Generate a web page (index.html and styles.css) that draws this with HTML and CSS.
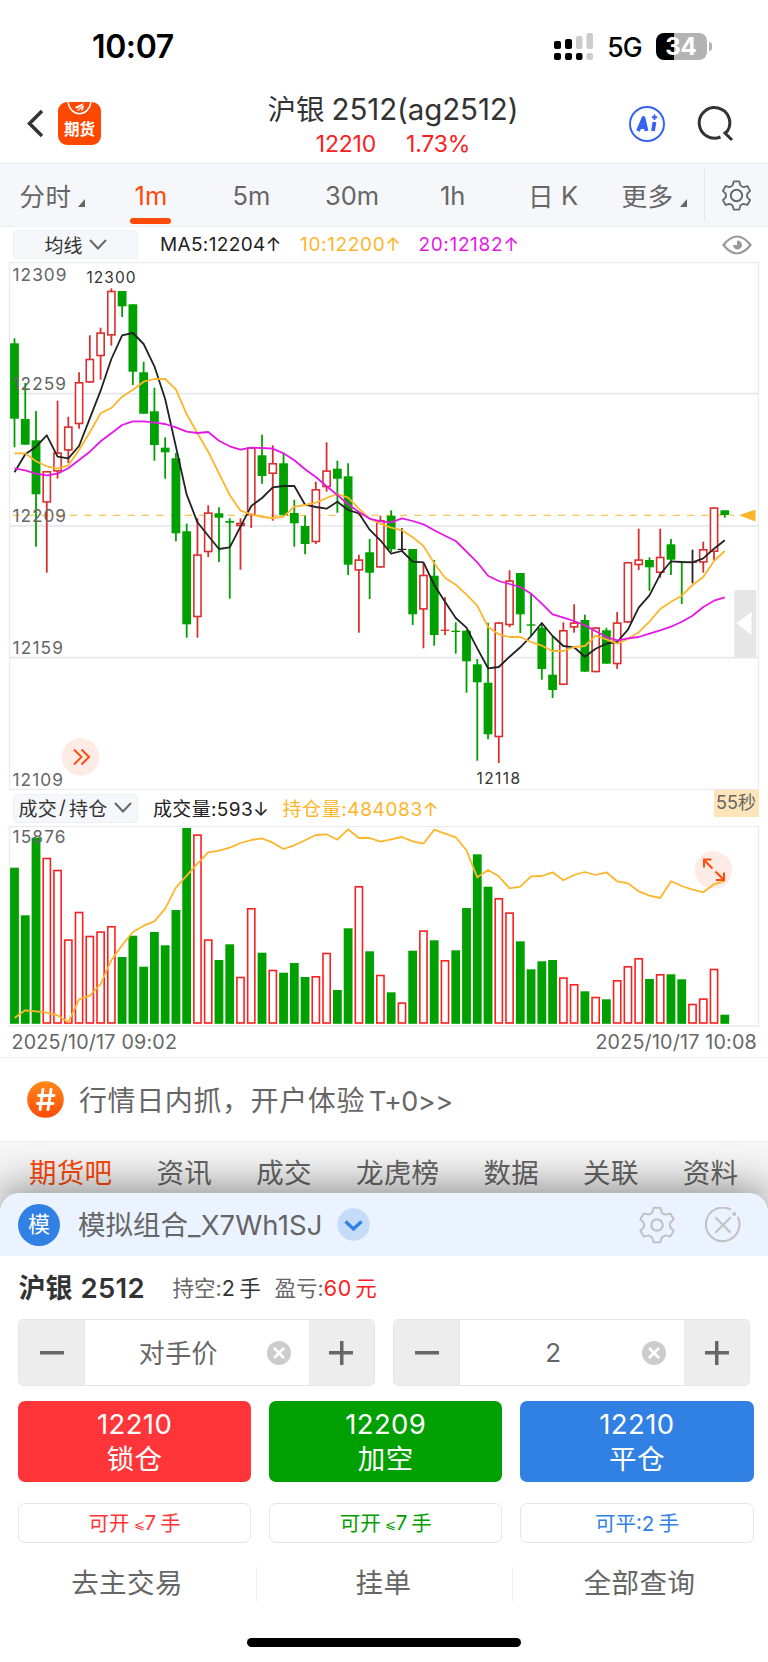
FILE: index.html
```html
<!DOCTYPE html>
<html lang="zh-CN">
<head>
<meta charset="utf-8">
<title>沪银 2512</title>
<link rel="stylesheet" href="styles.css">
</head>
<body>
<svg class="defs" width="0" height="0">
  <symbol id="gear" viewBox="-56 -56 112 112">
    <path d="M-14-37L-10-51H10L14-37Q18-32 25-30.600L39.200-34.200L49.200-16.800L39-6.400Q37 0 39 6.400L49.200 16.800L39.200 34.200L25 30.600Q18 32 14 37L10 51H-10L-14 37Q-18 32-25 30.600L-39.200 34.200L-49.200 16.800L-39 6.400Q-37 0-39-6.400L-49.200-16.800L-39.200-34.200L-25-30.600Q-18-32-14-37Z"/>
  </symbol>
</svg>
<div class="app">
  <div class="status">
    <span class="clock">10:07</span>
    <svg class="signal" width="40" height="28" viewBox="0 0 40 28">
      <rect x="0" y="9" width="7" height="8" rx="2"/><rect x="11" y="7" width="7" height="10" rx="2"/>
      <rect x="22" y="4" width="6.500" height="13" rx="2" fill="#ccc"/><rect x="32.500" y="1" width="6.500" height="16" rx="2" fill="#ccc"/>
      <rect x="0" y="21" width="7" height="7" rx="2"/><rect x="11" y="21" width="7" height="7" rx="2"/>
      <rect x="22" y="21" width="6.500" height="7" rx="2"/><rect x="32.500" y="21" width="6.500" height="7" rx="2" fill="#ccc"/>
    </svg>
    <span class="net">5G</span>
    <span class="battery">34</span><i class="battery-tip"></i>
  </div>

  <header class="header">
    <svg class="back" width="18" height="30" viewBox="0 0 18 30"><path d="M15 2L2.500 14.500L15 27" fill="none" stroke="#333" stroke-width="3.500"/></svg>
    <div class="logo">
      <svg width="43" height="17" viewBox="0 0 43 17"><path d="M10 0A11.600 13.500 0 0 0 33 0" fill="none" stroke="#fff" stroke-width="1.500"/><path d="M17 5L26 1L24 4L20 6Q18 7 17 5ZM19 8L26 3L25 8L23 9L23.500 6L20 9Z" fill="#fff"/></svg>
      <span>期货</span>
    </div>
    <div class="title">
      <h1>沪银<em>2512(ag2512)</em></h1>
      <p><span>12210</span><span>1.73%</span></p>
    </div>
    <svg class="ai" width="38" height="38" viewBox="0 0 38 38">
      <circle cx="19" cy="19" r="17" fill="none" stroke="#3763f5" stroke-width="2"/>
      <g fill="none" stroke="#3763f5" stroke-width="3.800" stroke-linejoin="round"><path d="M10 26L15.500 13L18.500 26M12.500 22H18M26.500 17L25 26"/><path d="M26.500 9.500V15M23.800 12.300H29.300" stroke-width="1.900"/></g>
    </svg>
    <svg class="search" width="38" height="38" viewBox="0 0 38 38"><path d="M24.500 32A15.300 15.300 0 1 1 31.500 26L29 28L36 35" fill="none" stroke="#333" stroke-width="3"/></svg>
  </header>

  <nav class="periods">
    <span class="more cjk">分时<i></i></span><span class="on">1m</span><span>5m</span><span>30m</span><span>1h</span><span class="cjk">日<em>K</em></span><span class="more cjk">更多<i></i></span>
    <b class="settings"><svg width="31" height="31" fill="none" stroke="#666" stroke-width="6.500" stroke-linejoin="round"><use href="#gear"/><circle cx="15.500" cy="15.500" r="5.700" stroke-width="1.900"/></svg></b>
  </nav>

  <div class="legend">
    <span class="pill">均线<svg width="18" height="11" viewBox="0 0 18 11"><path d="M1 1L9 9.500L17 1"/></svg></span>
    <span class="ma5">MA5:12204↑</span><span class="ma10">10:12200↑</span><span class="ma20">20:12182↑</span>
    <svg class="eye" width="30" height="20" viewBox="0 0 30 20"><path d="M1.500 10Q15-7 28.500 10Q15 27 1.500 10Z" fill="none" stroke="#999" stroke-width="2.200"/><path d="M15 5.500V10H11A4.500 4.500 0 1 0 15 5.500Z" fill="#999"/></svg>
  </div>

  <svg class="chart" id="price" width="768" height="528" viewBox="0 262 768 528">
    <g class="grid"><path d="M9.500 262.500H758.500V789.500H9.500Z"/><path class="mid" d="M10 393.700H758M10 525.800H758M10 657.700H758"/></g>
    <path d="M12.600 515.300H734" stroke="#fdb52b" stroke-width="1.100" stroke-dasharray="7.200 7.150"/>
    <path d="M739 515.300L755.500 509.500V521.500Z" fill="#fdb52b"/>
    <g id="candles"></g>
    <g class="axis">
      <text x="12.500" y="281" textLength="54">12309</text>
      <text x="12.500" y="389.700" textLength="53.500">12259</text>
      <text x="12.500" y="521.700" textLength="53.500">12209</text>
      <text x="12.500" y="653.700" textLength="50.500">12159</text>
      <text x="12.500" y="785.500" textLength="50.500">12109</text>
      <g class="peak"><text x="86.500" y="283" textLength="49">12300</text><text x="476.500" y="784.300" textLength="43.500">12118</text></g>
    </g>
    <g id="averages"></g>
    <circle cx="80.700" cy="757" r="18.700" fill="#feebe5"/>
    <path d="M74 749.500L81.500 757L74 764.500M81.500 749.500L89 757L81.500 764.500" fill="none" stroke="#ff4a0a" stroke-width="1.900"/>
    <path d="M734.300 592Q734.300 590 736.300 590H756.500V657.500H734.300Z" fill="#e6e6e6"/><path d="M736.500 623.300L751.500 612V635Z" fill="#fff"/>
  </svg>

  <div class="legend volume-legend">
    <span class="pill">成交<em>/</em>持仓<svg width="18" height="11" viewBox="0 0 18 11"><path d="M1 1L9 9.500L17 1"/></svg></span>
    <span class="vol">成交量:593↓</span><span class="oi">持仓量:484083↑</span>
    <span class="countdown">55秒</span>
  </div>

  <svg class="chart" id="volume" width="768" height="201" viewBox="0 826 768 201">
    <g class="grid"><path d="M9.500 826.500H758.500V1026H9.500Z"/></g>
    <g id="bars"></g>
    <g class="axis"><text x="12.500" y="843" textLength="53">15876</text></g>
    <circle cx="713.500" cy="870" r="18.700" fill="#feebe5"/>
    <g id="interest"></g>
    <path d="M712.500 868.500L704 860M704 867.500V859.500H711.500M715.500 871.500L724 880M724 872.500V880H716" fill="none" stroke="#ff4a0a" stroke-width="2"/>
  </svg>
  <div class="dates"><span>2025/10/17 09:02</span><span>2025/10/17 10:08</span></div>

  <div class="banner">
    <svg width="37" height="37" viewBox="0 0 37 37"><defs><linearGradient id="hot" x2="0" y2="1"><stop stop-color="#ff8a1a"/><stop offset="1" stop-color="#ff4b0a"/></linearGradient></defs><circle cx="18.500" cy="18.500" r="18.300" fill="url(#hot)"/><path d="M16 8.500L13 28.500M24 8.500L21 28.500M11.500 14.500H27M10.500 22.500H26" stroke="#fff" stroke-width="2.900" stroke-linecap="round"/></svg>
    <span>行情日内抓，开户体验<em>T+0&gt;&gt;</em></span>
  </div>

  <nav class="topics"><span class="on">期货吧</span><span>资讯</span><span>成交</span><span>龙虎榜</span><span>数据</span><span>关联</span><span>资料</span></nav>

  <section class="sheet">
    <div class="account">
      <span class="badge">模</span>
      <span class="name">模拟组合<em>_X7Wh1SJ</em></span>
      <svg width="33" height="33" viewBox="0 0 33 33"><circle cx="16.500" cy="16.500" r="16.200" fill="#c5dcf8"/><path d="M8.500 13.500L16.500 21L24.500 13.500" fill="none" stroke="#3180e3" stroke-width="3.300"/></svg>
      <svg class="cog" width="38" height="38" fill="none" stroke="#c2c2c2" stroke-width="6" stroke-linejoin="round"><use href="#gear"/><circle cx="19" cy="19" r="5.700" stroke-width="2.200"/></svg>
      <svg width="36" height="36" viewBox="0 0 36 36" fill="none" stroke="#c2c2c2" stroke-width="2.100"><path d="M26 2.700A16.800 16.800 0 1 0 32.700 9.700M10.300 10.300L25.700 25.700M25.700 10.300L10.300 25.700"/><circle cx="29.200" cy="7" r="2" fill="#c2c2c2" stroke="none"/></svg>
    </div>
    <div class="position">
      <strong>沪银<em>2512</em></strong>
      <span class="held">持空:<b>2<u>手</u></b></span>
      <span class="profit">盈亏:<b>60<u>元</u></b></span>
    </div>
    <div class="steppers">
      <div class="stepper"><i class="minus"></i><span class="cjk">对手价</span><svg width="24" height="24" viewBox="0 0 24 24"><circle cx="12" cy="12" r="12" fill="#ccc"/><path d="M7 7L17 17M17 7L7 17" stroke="#fff" stroke-width="2.500"/></svg><i class="plus"></i></div>
      <div class="stepper"><i class="minus"></i><span>2</span><svg width="24" height="24" viewBox="0 0 24 24"><circle cx="12" cy="12" r="12" fill="#ccc"/><path d="M7 7L17 17M17 7L7 17" stroke="#fff" stroke-width="2.500"/></svg><i class="plus"></i></div>
    </div>
    <div class="trade">
      <button class="red"><span>12210</span><span>锁仓</span></button>
      <button class="green"><span>12209</span><span>加空</span></button>
      <button class="blue"><span>12210</span><span>平仓</span></button>
    </div>
    <div class="limits">
      <span class="red">可开<small>⩽</small>7<u>手</u></span>
      <span class="green">可开<small>⩽</small>7<u>手</u></span>
      <span class="blue">可平:2<u>手</u></span>
    </div>
    <div class="actions"><span>去主交易</span><span>挂单</span><span>全部查询</span></div>
    <div class="home"></div>
  </section>
</div>
<script src="chart.js"></script>
</body>
</html>
```
FILE: styles.css
```css
* { box-sizing: border-box; }
body {
  margin: 0;
  background: #fff;
  color: #666;
  font-family: Inter, "Noto Sans CJK SC", sans-serif;
  -webkit-font-smoothing: antialiased;
}
em, i { font-style: normal; }
u { text-decoration: none; }
svg { display: block; flex: none; }
.defs { position: absolute; }
.app { width: 768px; height: 1662px; overflow: hidden; display: flex; flex-direction: column; }
.app > * { flex: none; }

.status { height: 82px; padding: 10px 56.500px 0 92px; display: flex; align-items: center; color: #000; }
.clock { font-size: 32px; font-weight: 600; letter-spacing: -.4px; margin-right: auto; }
.signal { margin-top: -1px; }
.net { font-size: 26.500px; font-weight: 500; letter-spacing: -1px; margin: 1px 14px 0 13.500px; }
.battery { width: 51px; height: 27px; border-radius: 8px; background: linear-gradient(90deg, #000 35%, #b3b3b3 35%); color: #fff; font-size: 24px; font-weight: 700; line-height: 27px; text-align: center; }
.battery-tip { width: 3px; height: 9px; border-radius: 0 4px 4px 0; background: #b3b3b3; margin-left: 2px; }

.header { height: 82px; padding: 2px 34.500px 0 27px; display: flex; align-items: center; border-bottom: 1px solid #e9ebee; }
.back { margin-top: 1px; }
.logo { width: 43px; height: 43px; margin: -1px 0 0 13px; border-radius: 9px; background: #ff4700; color: #fff; text-align: center; }
.logo span { display: block; font-size: 15.500px; font-weight: 700; line-height: 21px; }
.title { flex: 1; margin-left: 57.500px; text-align: center; }
h1 { margin: 2px 0 0; color: #333; font-size: 28.500px; font-weight: 400; line-height: 38px; white-space: nowrap; }
h1 em { margin-left: 7px; font-size: 29.500px; letter-spacing: -.1px; }
.title p { margin: 0; color: #fa2020; font-size: 23px; line-height: 30px; letter-spacing: -.2px; display: flex; justify-content: center; gap: 30px; }
.ai { margin-right: 30px; }

.periods { height: 63px; background: #f6f7fa; display: grid; grid-template-columns: repeat(7, 100.600px) 1fr; align-items: stretch; font-size: 25.500px; border-bottom: 1px solid #eceef1; }
.periods span { display: flex; align-items: center; justify-content: center; position: relative; }
.periods .cjk { padding-bottom: 2px; letter-spacing: .4px; }
.periods em { margin: 2px 0 0 7px; }
.periods .more { justify-content: flex-start; padding-left: 19.500px; }
.periods .more:nth-child(7) { padding-left: 18px; }
.periods span i { align-self: flex-end; margin: 0 0 17px 7px; border-left: 7px solid transparent; border-bottom: 8px solid #666; }
.periods .on { color: #ff4a0a; }
.periods .on::after { content: ""; position: absolute; left: 29.500px; bottom: 2px; width: 41px; height: 6px; border-radius: 3px; background: #ff4a0a; }
.settings { margin: 5px 0; border-left: 1px solid #e5e6e9; display: flex; align-items: center; justify-content: center; }

.legend { height: 35px; padding: 0 15px 0 13px; display: flex; align-items: center; font-size: 19px; white-space: nowrap; }
.legend > span { padding-bottom: 1px; }
.pill { width: 125px; height: 29px; margin-right: 22px; border: 1px solid #eff0f3; border-radius: 4px; background: #f6f7fa; color: #333; display: flex; align-items: center; justify-content: center; gap: 6px; font-size: 19px; }
.pill path { fill: none; stroke: #666; stroke-width: 2; }
.ma5 { color: #222; width: 140px; letter-spacing: .35px; }
.ma10 { color: #fdb52b; width: 118.500px; letter-spacing: .65px; }
.ma20 { color: #e617e6; letter-spacing: .65px; }
.eye { margin-left: auto; margin-right: 1px; }
.chart { display: block; }
.grid path { fill: none; stroke: #eaebef; stroke-width: 1.300; }
.grid .mid { stroke: #e6e8ee; stroke-width: 1.800; }
.axis { fill: #666; font-size: 17.300px; }
.peak { fill: #333; font-size: 15.500px; }
.volume-legend { height: 36px; padding-right: 9.500px; }
.volume-legend .pill { margin-right: 15px; gap: 0; letter-spacing: .2px; }
.pill em { margin: 0 3px 0 2px; }
.volume-legend .pill svg { margin-left: 7px; }
.vol { color: #222; width: 129.500px; letter-spacing: .35px; }
.oi { color: #fdb52b; letter-spacing: .6px; }
.countdown { align-self: flex-start; margin-left: auto; width: 45px; height: 27px; background: #fde5b9; font-size: 18px; line-height: 26px; text-align: center; }
.dates { height: 31px; padding: 0 11px 1px 11.500px; display: flex; justify-content: space-between; align-items: center; font-size: 19.700px; letter-spacing: .2px; border-bottom: 1px solid #eee; }

.banner { height: 83px; padding-left: 27px; display: flex; align-items: center; gap: 15px; font-size: 28px; letter-spacing: .6px; }
.banner span { margin-top: -2px; }
.banner em { margin-left: 4px; font-size: 27px; letter-spacing: -.5px; }
.topics { height: 52px; padding: 7px 29.500px 0 29px; background: #f7f7f7; border-top: 1px solid #eee; display: flex; justify-content: space-between; align-items: center; font-size: 27.500px; letter-spacing: .3px; }
.topics .on { color: #ff4a0a; }

.sheet { height: 469px; border-radius: 20px 20px 0 0; background: #fff; box-shadow: 0 0 45px 4px rgba(0, 0, 0, .48); }
.account { height: 63px; padding: 0 27.500px 0 18px; border-radius: 20px 20px 0 0; background: #eaf3ff; display: flex; align-items: center; }
.badge { width: 42px; height: 42px; border-radius: 50%; background: #3180e3; color: #fff; font-size: 22px; line-height: 41px; text-align: center; }
.name { margin: -3px 16px 0 18px; width: 243px; font-size: 27.500px; white-space: nowrap; }
.name em { letter-spacing: .1px; }
.cog { margin: 0 29px 0 auto; }
.position { height: 63px; padding: 0 0 2px 18.500px; display: flex; align-items: center; font-size: 21.500px; white-space: nowrap; }
.position strong { width: 154px; color: #333; font-size: 27px; font-weight: 600; }
.position em { margin-left: 8px; font-size: 27.500px; letter-spacing: .3px; }
.position b { color: #333; font-weight: 400; letter-spacing: .3px; }
.position u, .limits u { margin-left: 4px; }
.held { width: 102px; }
.profit b { color: #fa2020; letter-spacing: .8px; }
.profit u { margin-left: 3px; }
.steppers { padding: 0 18px; display: grid; grid-template-columns: 1fr 1fr; gap: 18.500px; }
.stepper { height: 67px; border: 1px solid #e6e6e6; border-radius: 5px; overflow: hidden; display: grid; grid-template-columns: 66px 1fr 24px 18px 65px; align-items: center; }
.stepper span { padding-left: 4px; text-align: center; font-size: 26px; }
.stepper .cjk { padding: 0 0 3px 5px; letter-spacing: .4px; }
.stepper i { height: 100%; background: linear-gradient(#666, #666) center / 24px 3.500px no-repeat #ededed; }
.stepper .minus { border-right: 1px solid #e6e6e6; }
.stepper .plus { grid-column: 5; background: linear-gradient(#666, #666) center / 24px 3.500px no-repeat, linear-gradient(#666, #666) center / 3.500px 24px no-repeat #ededed; }
.trade, .limits { padding: 0 14.500px 0 18px; display: grid; grid-template-columns: repeat(3, 1fr); gap: 18px; }
.trade { margin-top: 15px; }
.trade button { height: 81px; padding: 6px 0 0; border: 0; border-radius: 7px; color: #fff; font: 27.500px/34.500px Inter, "Noto Sans CJK SC", sans-serif; letter-spacing: .4px; display: flex; flex-direction: column; align-items: center; }
.trade .red { background: #ff353a; }
.trade .green { background: #00a000; }
.trade .blue { background: #3180e3; }
.limits { margin-top: 21px; }
.limits span { height: 40px; padding-bottom: 2px; border: 1.500px solid #e5e5e5; border-radius: 7px; display: flex; align-items: center; justify-content: center; font-size: 20.500px; }
.limits small { margin: 4px 0 0 4px; font-size: 13px; }
.limits .red { color: #ff353a; }
.limits .green { color: #00a000; }
.limits .blue { color: #3180e3; }
.actions { margin-top: 23px; height: 33px; display: grid; grid-template-columns: 256px 256px 256px; align-items: center; font-size: 27.500px; letter-spacing: .4px; text-align: center; }
.actions span { line-height: 35px; padding-right: 2px; }
.actions span + span { border-left: 1px solid #f0f0f0; }
.home { width: 274px; height: 9px; margin: 39px auto 0; border-radius: 5px; background: #000; }
```
FILE: chart.js
```js
// One row per minute: colour, high, body top, body bottom, low.
const candles = [
  ["g",338.3,343.3,418.7,447.3],["g",383,419,444.7,444.7],["g",411,440.3,494.3,546.7],["r",471,471,502.7,572.7],
  ["r",400.7,452.3,471.7,478.7],["r",416.7,426.3,450.7,463],["r",372.3,382,424.3,428.7],["r",335.3,358.7,382.7,382.7],
  ["r",327.7,332.3,356.3,379.7],["r",288.3,290.7,335.7,345.7],["g",291,291,306.3,317],["g",304.3,304.3,371.7,385],
  ["g",361.7,372.3,413.7,413.7],["g",387.7,411.3,445,460.7],["g",437.3,447.7,452.3,478.7],["g",453,458.3,533.3,541.3],
  ["g",523.7,531.3,624.3,637.7],["r",518.3,554.3,617.3,637.7],["r",505.3,512.3,552.3,557],["g",507.3,513.3,517.7,562],
  ["g",518.3,521,522.7,598.7],["r",518.3,522.7,526.3,569.7],["r",447.3,447.3,515.3,528],["g",434.7,455.3,476,483.7],
  ["r",445.3,463,474,520.7],["g",453.3,463.3,515.3,515.3],["g",499.7,513,523.3,546.7],["g",515.7,526,544,554.3],
  ["r",481.7,489,542.3,544],["r",442.3,470.3,487.3,491.7],["g",460.7,468.7,478.7,512.7],["g",463.3,476.3,564.7,575],
  ["r",554.7,559.3,570.7,632.7],["g",539,552.3,572.7,599],["r",515.7,520,567.7,567.7],["g",510.3,515.7,549.3,552],
  ["k",528.3,548.8,550,551],["g",549,549,614.3,625],["r",563.3,574.7,609.7,648.3],["g",560,575.7,635,645.7],
  ["r",597,629.7,630.9,635],["g",622.3,630.7,632,653.7],["g",630,630.7,661.3,692.7],["g",659,664.3,682.3,760.7],
  ["g",622.7,682.7,734.3,739.3],["r",622.3,622.3,737.3,763],["r",570.3,580.3,625.3,627.3],["g",573,573,614.3,633],
  ["g",593.7,624.3,625.7,636],["g",623.3,627.7,669,679.7],["g",636.7,674.7,690,698],["r",622.3,630,685,685],
  ["r",604.3,622.3,627.7,632.7],["g",614.7,620,671.7,671.7],["r",627.3,627.3,672.3,672.3],["g",627.7,630.3,663.7,663.7],
  ["r",612,622.3,664.3,669],["r",562,562,622.7,622.7],["r",528.7,559.3,565.3,570],["g",557.3,560,567.3,590.7],
  ["r",528.7,556.7,573,577.7],["g",539,544.3,559.7,575],["g",561.3,561.3,562.3,604],["k",549.7,561.7,562.7,583.3],
  ["r",541.7,549,562.7,572.7],["r",507.3,507.3,552,560],["g",510.3,510.3,515,517.7]
];
const averages = {
  "#222222": [472.3,454.3,446.7,435.3,456.7,458.3,446,418.3,390.7,359,335.3,333,344,366.3,399,446.7,494.7,522.3,535.7,549,547.3,526.7,506,498,487.3,486,486,504.7,507,508.7,501.7,510,513.3,529.7,540.3,553.7,551,561.7,562.3,585,601.7,618,627.7,648.3,668.3,667,656.7,647.3,636,623,636,646,647.3,656.7,648.7,643.7,642,629.7,607.7,595.3,574.3,561.3,562,562.3,558.3,548.7,540.3],
  "#fdb52b": [453.3,453.3,461.3,466.3,468.7,465.3,450,432.3,413.3,408,396.7,389.7,381.7,379,379,389.3,414.3,433.3,451.7,473.3,495,510.7,514.3,517,518,516.7,506.7,505,502.7,498,494,497.7,508.7,518.7,523.7,527.7,530.3,537.3,546,563.3,577.7,584.7,594.7,605.7,627,634.3,637,637,642,645.7,651,651,647,646,635.7,639.3,643.7,639,632.3,621.7,609,601.7,595.7,585,577,561,551],
  "#e617e6": [468.3,470.3,473.7,475.3,473.7,468.3,460,451.7,441.3,433.3,425,421.3,421.3,422.7,424,427.3,431.7,433,432,440.7,446.3,449.7,447.7,448,448.7,453.3,460.3,469.3,477,486.3,495,504.3,512,518.7,521.3,522.3,518.3,521,524.3,530.3,535.7,541,551.7,562.3,575.7,581,584,587,593.7,603.7,614.3,617.7,621,625.3,631.3,637,640.3,638.3,637,633.7,630.3,626.7,621.7,615.7,607,600.7,597.3]
};
const volumes = [867.7,915.3,837.7,857.7,869.7,939.3,911.7,935.7,931.3,926,957,935.7,966.7,932,945.3,910,828,834.3,939.3,960,944.3,976.7,908,952.7,969.7,972.7,963,977,976,952.7,990,928.3,886,951.3,974.7,992.3,1002.3,950.7,930.3,940.3,960,950.3,908,854.3,886.7,898,912.3,941.3,969.3,961.3,960,977.3,984,991.3,996.7,999.3,980,966,958,979,974,974.3,979.3,1003.7,998.3,968.7,1014.7];
const interest = [1018,1010.3,1011.3,1012.7,1015.3,1022.3,999.3,995.7,984,960.3,945.3,932,925.7,921.3,908.7,887.7,875.7,863.7,852.3,850.7,847.7,843,840,838.3,842.7,849,845.3,840.3,835,834.3,839.7,829.3,838,838,841.7,839.3,837,841.3,843.7,829.7,833.7,837.3,850.3,877.3,870,876.3,888.3,886.7,876.3,876,872.3,880.3,875,872,875,872.3,881.3,883.3,891.3,895.7,898,881.3,886,889.7,892.3,884.3,881];

const GREEN = "#00a000";
const STEP = 10.762;
const BODY = 8.8;
const BASE = 1023.8;
const xAt = i => 14.5 + i * STEP;

function box(x, top, bottom, color, hollow) {
  const inset = hollow ? 0.8 : 0;
  return `<rect x="${x - BODY / 2 + inset}" y="${top + inset}" width="${BODY - 2 * inset}" height="${Math.max(0.5, bottom - top - 2 * inset)}" ` +
    (hollow ? `fill="#fff" stroke="${color}" stroke-width="1.6"/>` : `fill="${color}"/>`);
}
function line(points, color) {
  return `<polyline fill="none" stroke="${color}" stroke-width="1.8" stroke-linejoin="round" points="${points.map((y, i) => xAt(i) + "," + y).join(" ")}"/>`;
}

document.getElementById("candles").innerHTML = candles.map(([kind, high, top, bottom, low], i) => {
  const color = { g: GREEN, r: "#d9302f", k: "#222" }[kind];
  const x = xAt(i);
  const wick = `<path d="M${x} ${high}V${low}" stroke="${color}" stroke-width="1.8"/>`;
  return wick + box(x, top, bottom, color, kind === "r" && bottom - top > 2);
}).join("");
document.getElementById("averages").innerHTML = Object.entries(averages).map(([c, p]) => line(p, c)).join("");
document.getElementById("bars").innerHTML = volumes.map((top, i) => {
  const up = candles[i][0] === "r" || candles[i][0] === "k";
  return box(xAt(i), top, BASE, up ? "#fa2020" : GREEN, up && i !== 63 || up);
}).join("");
document.getElementById("interest").innerHTML = line(interest, "#fdb52b");
```
